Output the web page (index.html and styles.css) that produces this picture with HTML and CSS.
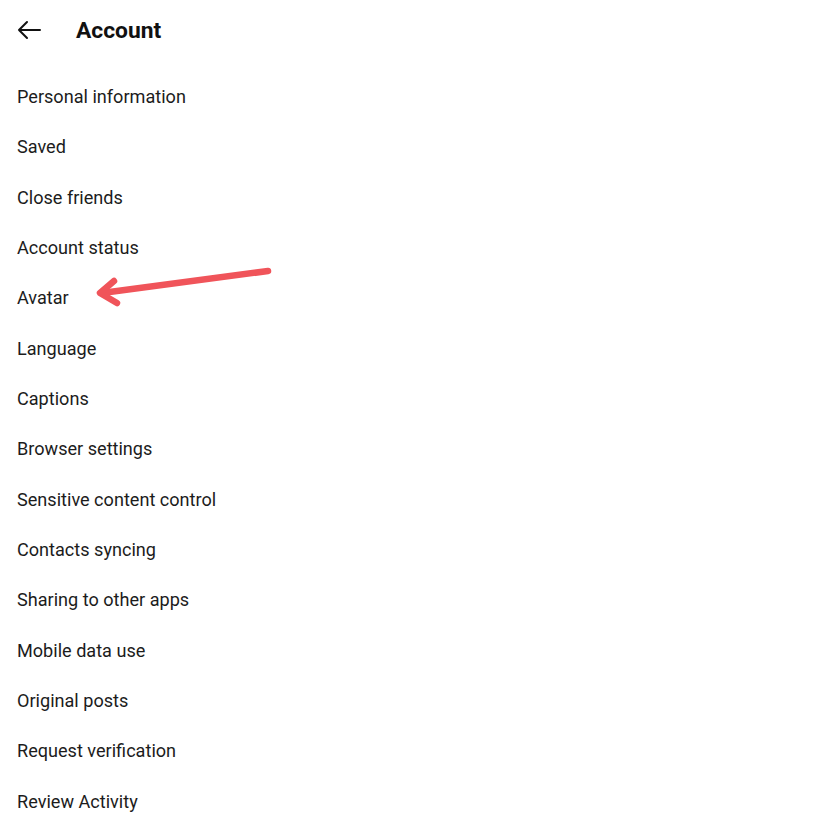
FILE: index.html
```html
<!DOCTYPE html>
<html>
<head>
<meta charset="utf-8">
<link rel="stylesheet" href="styles.css">
</head>
<body>
<div class="page">
  <header class="topbar">
    <svg class="back" width="26" height="20" viewBox="0 0 26 20"><path d="M24 10H3M11 2L3 10L11 18" fill="none" stroke="#111" stroke-width="2" stroke-linecap="round" stroke-linejoin="round"/></svg>
    <h1 class="title">Account</h1>
  </header>
  <ul class="menu">
    <li>Personal information</li>
    <li>Saved</li>
    <li>Close friends</li>
    <li>Account status</li>
    <li>Avatar</li>
    <li>Language</li>
    <li>Captions</li>
    <li>Browser settings</li>
    <li>Sensitive content control</li>
    <li>Contacts syncing</li>
    <li>Sharing to other apps</li>
    <li>Mobile data use</li>
    <li>Original posts</li>
    <li>Request verification</li>
    <li>Review Activity</li>
  </ul>
  <svg class="pointer" width="826" height="823" viewBox="0 0 826 823">
    <g fill="none" stroke="#f0545a" stroke-width="6.5" stroke-linecap="round" stroke-linejoin="round">
      <path d="M268 271L102 293"/>
      <path d="M114 281L100 293L117 303"/>
    </g>
  </svg>
</div>
</body>
</html>
```
FILE: styles.css
```css
html, body {
  margin: 0;
  padding: 0;
  background: #fff;
}
.page {
  position: relative;
  width: 826px;
  height: 823px;
  overflow: hidden;
  font-family: Roboto, "Liberation Sans", sans-serif;
  color: #1a1a1a;
}
.topbar {
  display: flex;
  align-items: center;
  height: 60px;
  padding-left: 16px;
}
.back {
  display: block;
  margin-right: 34px;
}
.title {
  margin: 0;
  font-size: 22.8px;
  font-weight: 700;
  color: #111;
}
.menu {
  list-style: none;
  margin: 0;
  padding: 12px 0 0 17px;
}
.menu li {
  height: 50.35px;
  line-height: 50px;
  font-size: 18.1px;
  color: #1c1c1c;
}
.pointer {
  position: absolute;
  left: 0;
  top: 0;
  pointer-events: none;
}
```
